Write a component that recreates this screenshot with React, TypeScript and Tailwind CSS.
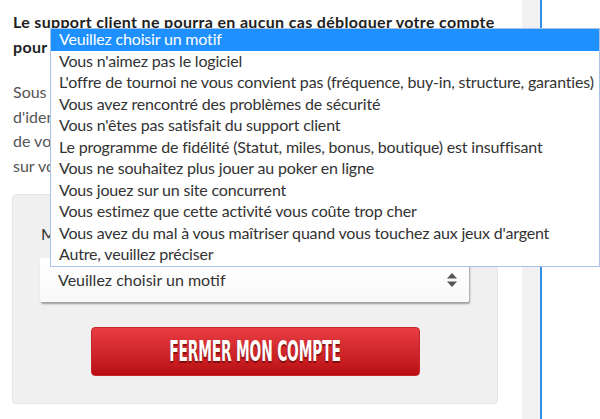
const FONT = "font-['Lato','Liberation_Sans',sans-serif]";

const reasons = [
  "Veuillez choisir un motif",
  "Vous n'aimez pas le logiciel",
  "L'offre de tournoi ne vous convient pas (fréquence, buy-in, structure, garanties)",
  "Vous avez rencontré des problèmes de sécurité",
  "Vous n'êtes pas satisfait du support client",
  "Le programme de fidélité (Statut, miles, bonus, boutique) est insuffisant",
  "Vous ne souhaitez plus jouer au poker en ligne",
  "Vous jouez sur un site concurrent",
  "Vous estimez que cette activité vous coûte trop cher",
  "Vous avez du mal à vous maîtriser quand vous touchez aux jeux d'argent",
  "Autre, veuillez préciser",
];

function SelectArrows() {
  return (
    <svg width="10" height="14" viewBox="0 0 10 14" className="shrink-0">
      <path d="M5 0 L10 5.5 L0 5.5 Z" fill="#555" />
      <path d="M5 14 L10 8.5 L0 8.5 Z" fill="#555" />
    </svg>
  );
}

function OptionList() {
  return (
    <div className="absolute left-[50px] top-[28px] w-[550px] bg-white border border-[#a9c3e6] z-10">
      {reasons.map((r, i) => (
        <div
          key={r}
          className={
            "h-[21.5px] leading-[19px] pl-[8px] whitespace-nowrap text-[16px] tracking-[-0.18px] " +
            (i === 0 ? "bg-[#1e90ff] text-white" : "text-[#333]")
          }
        >
          {r}
        </div>
      ))}
    </div>
  );
}

export default function App() {
  return (
    <div className={`relative w-[600px] h-[419px] overflow-hidden bg-white flex ${FONT}`}>
      {/* main column */}
      <div className="w-[522px] shrink-0 pl-[13px] pr-[10px] pt-[10px] overflow-hidden">
        <p className="text-[16px] leading-[24.5px] font-bold text-[#1e1e1e] tracking-[0.33px] whitespace-nowrap">
          Le support client ne pourra en aucun cas débloquer votre compte
          <br />
          pour quelque raison que ce soit.
        </p>
        <p className="mt-[21px] text-[16px] leading-[24.5px] text-[#555] whitespace-nowrap">
          Sous 48 heures, votre compte sera fermé.
          <br />
          d'identité pourra vous être demandée
          <br />
          de votre compte par notre équipe
          <br />
          sur votre adresse email.
        </p>
        <div className="mt-[16px] -ml-[1px] w-[486px] h-[210px] rounded-[4px] bg-[#f0f0f0] border border-[#e6e6e6] pt-[27px] px-[28px]">
          <div className="text-[16px] leading-[24px] text-[#333]">Motif de la fermeture</div>
          <div className="mt-[12px] h-[44px] w-[429px] -ml-[1px] rounded-[2px] bg-gradient-to-b from-white to-[#f9f9f9] shadow-[1px_2px_2px_rgba(0,0,0,0.35)] flex items-center justify-between pl-[18px] pr-[12px] text-[16px] text-[#333]">
            <span>Veuillez choisir un motif</span>
            <SelectArrows />
          </div>
          <div className="mt-[25px] mx-auto w-[329px] h-[49px] rounded-[4px] border border-[#c3272c] bg-gradient-to-b from-[#e83c42] to-[#b90b10] flex items-center justify-center">
            <span className="font-['DejaVu_Sans_Condensed',sans-serif] font-bold text-[24px] text-white tracking-[-0.3px] scale-x-[0.64] scale-y-[1.18] whitespace-nowrap [text-shadow:0_1px_1px_rgba(80,0,0,0.6)]">
              FERMER MON COMPTE
            </span>
          </div>
        </div>
      </div>
      {/* side strip */}
      <div className="w-[18px] shrink-0 bg-[#f1f1f1]" />
      <div className="w-[2px] shrink-0 bg-[#2f8ee6]" />
      <div className="flex-1 bg-white" />
      <OptionList />
    </div>
  );
}
